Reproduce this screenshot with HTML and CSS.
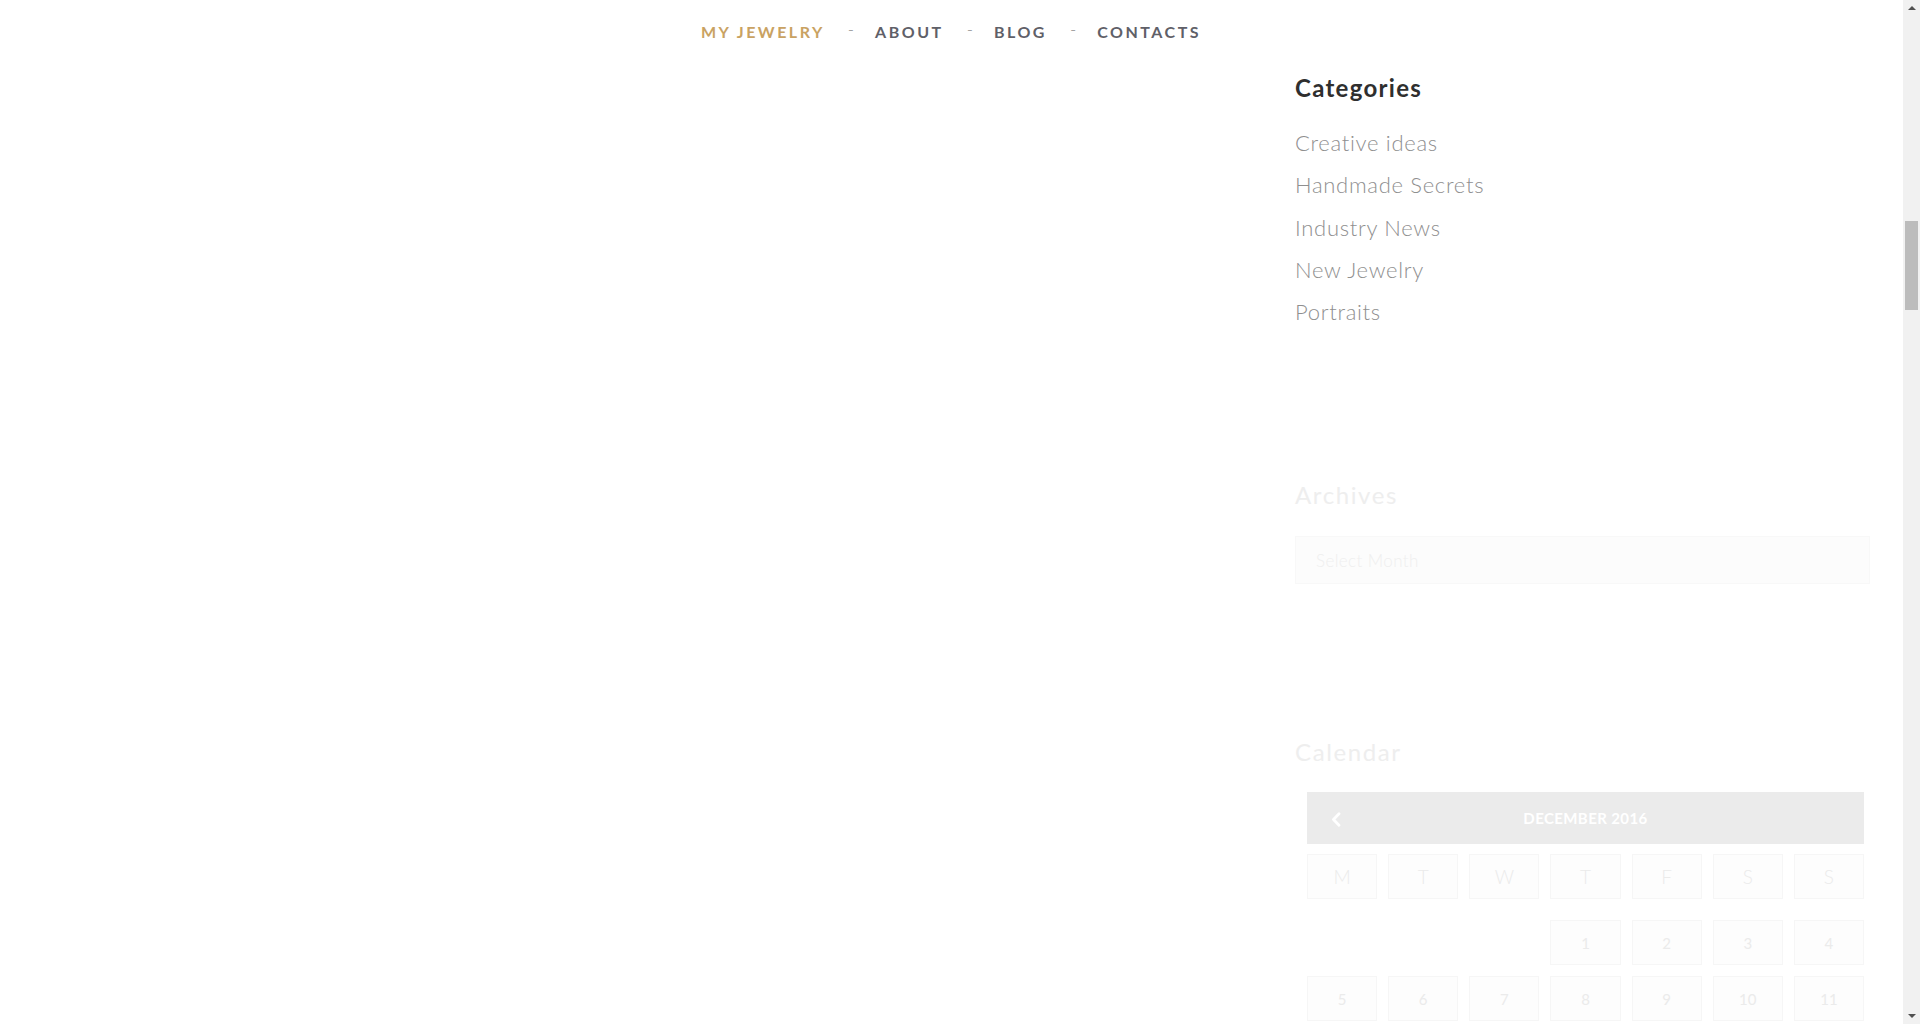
FILE: index.html
```html
<!DOCTYPE html>
<html lang="en">
<head>
<meta charset="utf-8">
<title>Blog</title>
<link rel="stylesheet" href="styles.css">
</head>
<body>
<div class="page">
  <header class="topbar">
    <nav class="menu">
      <a class="menu-item active" href="#">My Jewelry</a>
      <span class="sep">-</span>
      <a class="menu-item" href="#">About</a>
      <span class="sep">-</span>
      <a class="menu-item" href="#">Blog</a>
      <span class="sep">-</span>
      <a class="menu-item" href="#">Contacts</a>
    </nav>
  </header>
  <div class="layout">
    <main class="main"></main>
    <aside class="sidebar">
      <section class="widget categories">
        <h3 class="widget-title">Categories</h3>
        <ul class="cat-list">
          <li><a href="#">Creative ideas</a></li>
          <li><a href="#">Handmade Secrets</a></li>
          <li><a href="#">Industry News</a></li>
          <li><a href="#">New Jewelry</a></li>
          <li><a href="#">Portraits</a></li>
        </ul>
      </section>
      <section class="widget archives faded">
        <h3 class="widget-title">Archives</h3>
        <div class="select">Select Month</div>
      </section>
      <section class="widget calendar faded">
        <h3 class="widget-title">Calendar</h3>
        <div class="cal">
          <div class="cal-head">
            <span class="cal-prev"><svg width="10" height="15" viewBox="0 0 10 15"><path d="M8 1.8 L2.5 7.5 L8 13.2" fill="none" stroke="#fff" stroke-width="2.8" stroke-linecap="round" stroke-linejoin="round"/></svg></span>
            <span class="cal-month">December 2016</span>
          </div>
          <div class="cal-row days">
            <span class="cell">M</span><span class="cell">T</span><span class="cell">W</span><span class="cell">T</span><span class="cell">F</span><span class="cell">S</span><span class="cell">S</span>
          </div>
          <div class="cal-row first">
            <span class="cell empty"></span><span class="cell empty"></span><span class="cell empty"></span><span class="cell num">1</span><span class="cell num">2</span><span class="cell num">3</span><span class="cell num">4</span>
          </div>
          <div class="cal-row">
            <span class="cell num">5</span><span class="cell num">6</span><span class="cell num">7</span><span class="cell num">8</span><span class="cell num">9</span><span class="cell num">10</span><span class="cell num">11</span>
          </div>
        </div>
      </section>
    </aside>
  </div>
</div>
<div class="scrollbar">
  <span class="arrow up"></span>
  <div class="track"><div class="thumb"></div></div>
  <span class="arrow down"></span>
</div>
</body>
</html>
```

FILE: styles.css
```css
* { box-sizing: border-box; }
html, body { margin: 0; padding: 0; }
body {
  width: 1920px;
  height: 1024px;
  overflow: hidden;
  display: flex;
  background: #fff;
  font-family: "Lato", "Open Sans", sans-serif;
}
.page {
  flex: 1;
  display: flex;
  flex-direction: column;
  min-width: 0;
}
.topbar {
  height: 62px;
  padding: 20px 0 0 701px;
}
.menu {
  display: flex;
  align-items: center;
  height: 22px;
}
.menu-item {
  font-size: 16px;
  font-weight: 700;
  letter-spacing: 2.5px;
  text-transform: uppercase;
  color: #5f6068;
  text-decoration: none;
}
.menu-item.active { color: #c9a262; }
.sep {
  color: #8a8a8a;
  font-size: 17px;
  font-weight: 300;
  margin: -3px 21px 0 23px;
}
.layout {
  display: flex;
  flex: 1;
}
.main { width: 1295px; flex: none; }
.sidebar {
  width: 575px;
  flex: none;
  display: flex;
  flex-direction: column;
}
.widget-title {
  margin: 0;
  font-size: 24px;
  line-height: 30px;
  font-weight: 700;
  letter-spacing: 1.3px;
  color: #2f2f2f;
}
.categories { margin-top: 11px; }
.cat-list {
  list-style: none;
  margin: 19px 0 0;
  padding: 0;
}
.cat-list li {
  font-size: 22px;
  line-height: 42.3px;
  font-weight: 300;
  letter-spacing: 0.7px;
}
.cat-list a { color: #8f8f8f; text-decoration: none; }
.archives { margin-top: 147px; }
.faded .widget-title { color: #eeeeee; font-weight: 400; letter-spacing: 1.6px; }
.select {
  margin-top: 26px;
  height: 48px;
  background: #fcfcfc;
  border: 1px solid #f8f8f8;
  padding: 0 20px;
  display: flex;
  align-items: center;
  font-size: 17px;
  font-weight: 300;
  letter-spacing: 0.4px;
  color: #efefef;
}
.calendar { margin-top: 153px; }
.cal {
  margin: 25px 6px 0 12px;
}
.cal-head {
  height: 52px;
  background: #ebebeb;
  display: flex;
  align-items: center;
  justify-content: center;
  position: relative;
}
.cal-prev {
  position: absolute;
  left: 24px;
  top: 20px;
  display: flex;
}
.cal-month {
  font-size: 15px;
  font-weight: 700;
  text-transform: uppercase;
  color: #fff;
  letter-spacing: 0.4px;
  margin-top: -1px;
}
.cal-row {
  display: grid;
  grid-template-columns: repeat(7, 1fr);
  column-gap: 11px;
  margin-top: 11px;
}
.cal-row.days { margin-top: 10px; }
.cal-row.first { margin-top: 21px; }
.cell {
  height: 45px;
  background: #fdfdfd;
  border: 1px solid #f6f6f6;
  display: flex;
  align-items: center;
  justify-content: center;
  font-size: 19px;
  font-weight: 300;
  color: #ebebeb;
}
.cell.num { font-size: 15px; font-weight: 400; }
.cell.empty { background: transparent; border-color: transparent; }
.scrollbar {
  width: 17px;
  flex: none;
  background: #f1f1f1;
  display: flex;
  flex-direction: column;
  align-items: center;
}
.arrow {
  width: 0;
  height: 0;
  border-left: 4px solid transparent;
  border-right: 4px solid transparent;
}
.arrow.up { border-bottom: 4px solid #505050; margin-top: 6px; }
.arrow.down { border-top: 4px solid #505050; margin-bottom: 6px; }
.track {
  flex: 1;
  width: 100%;
  padding: 211px 2px 0;
}
.thumb {
  height: 89px;
  background: #bcbcbc;
}
```
